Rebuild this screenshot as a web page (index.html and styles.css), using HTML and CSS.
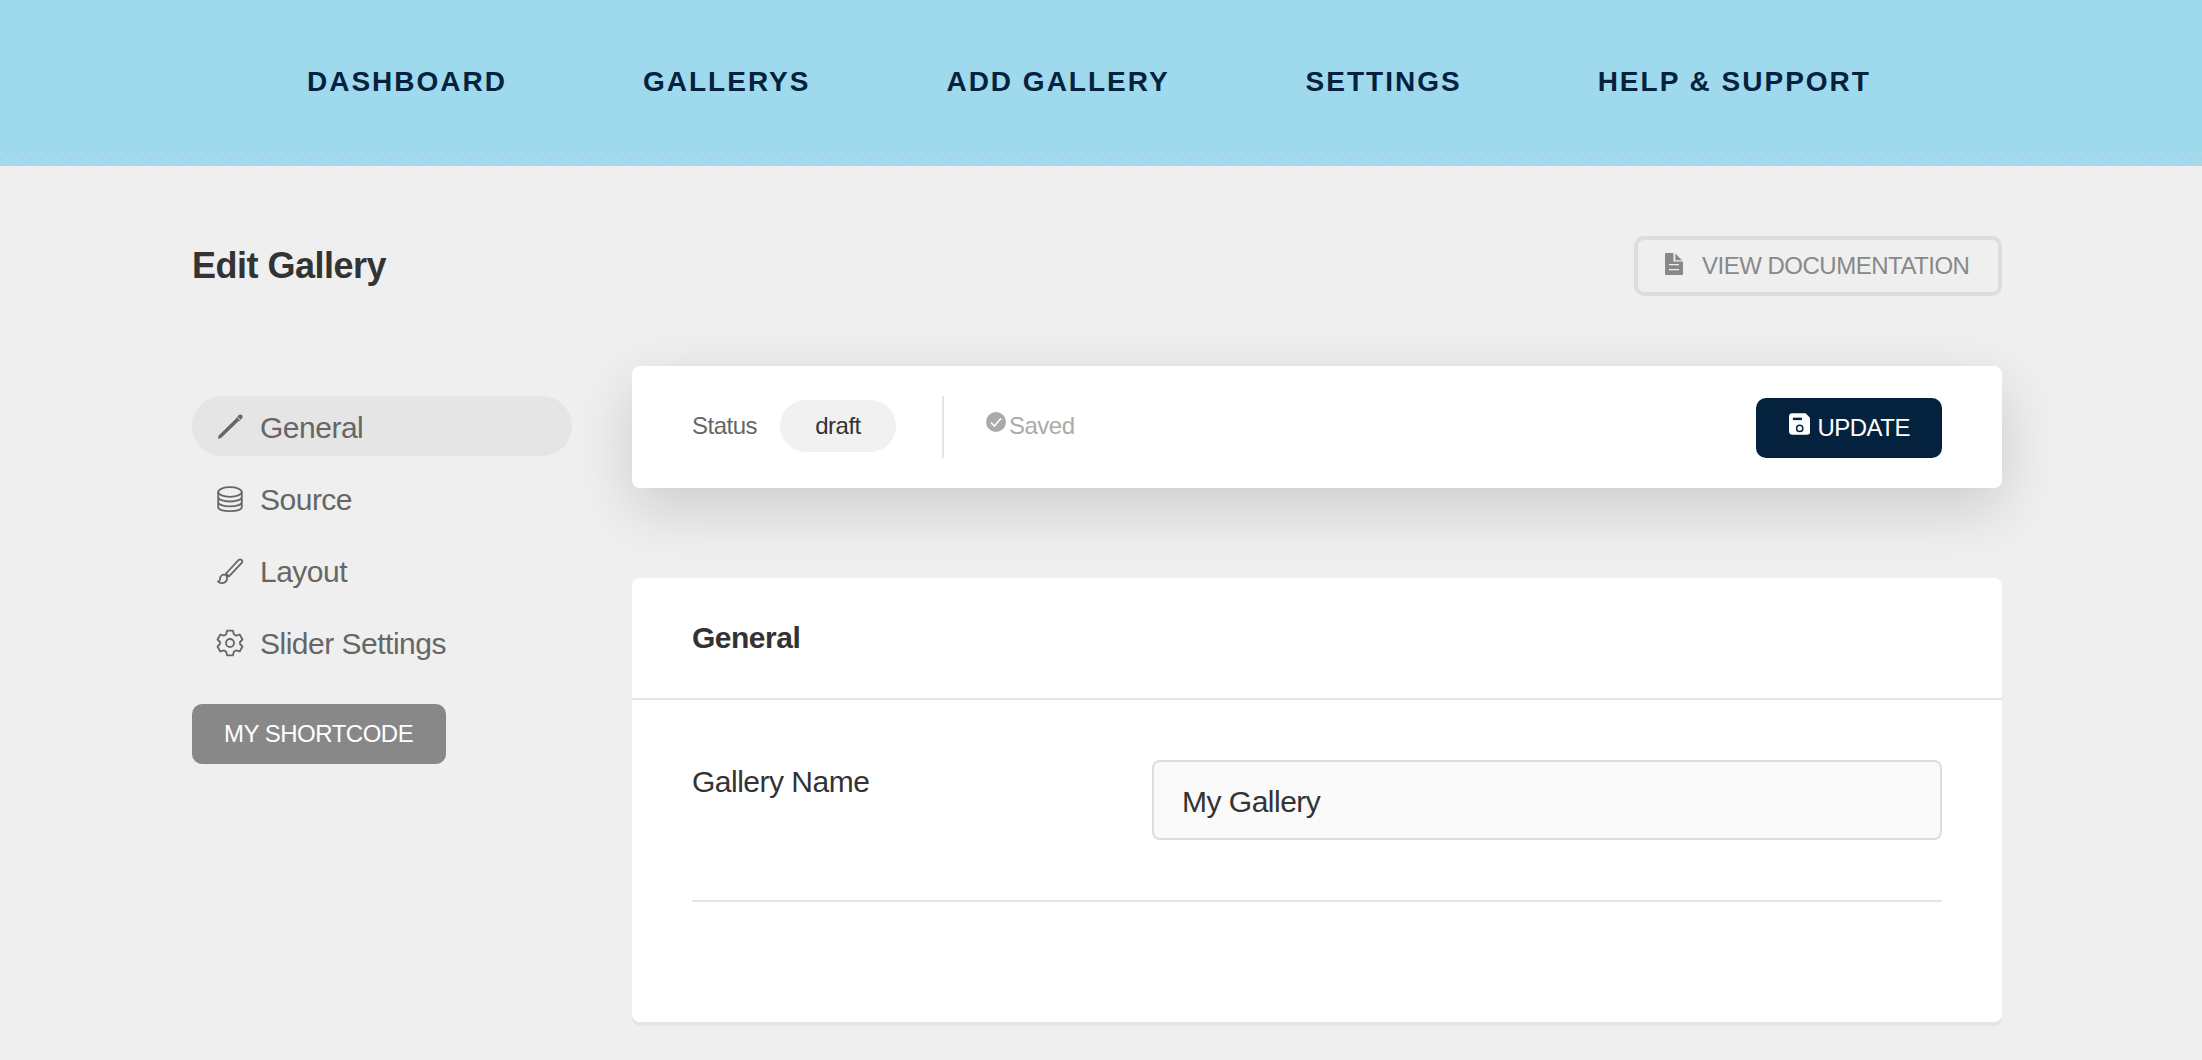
FILE: index.html
```html
<!DOCTYPE html>
<html lang="en">
<head>
<meta charset="utf-8">
<title>Edit Gallery</title>
<link rel="stylesheet" href="styles.css">
</head>
<body>
<header class="topbar">
  <nav class="topnav">
    <a>DASHBOARD</a>
    <a>GALLERYS</a>
    <a>ADD GALLERY</a>
    <a>SETTINGS</a>
    <a>HELP &amp; SUPPORT</a>
  </nav>
  <div class="stripes"></div>
</header>
<div class="page">
  <div class="titlebar">
    <h1>Edit Gallery</h1>
    <a class="btn btn-outline">
      <svg class="icon-doc" viewBox="0 0 18 22"><path fill="#888" fill-rule="evenodd" d="M1 0H8.500V8.500H18V21Q18 22 17 22H1Q0 22 0 21V1Q0 0 1 0ZM4 11V12.200H14V11ZM4 16V17.200H14V16Z"/><path fill="#888" d="M10.300 .5L17 7.300H10.300Z"/></svg>
      <span>VIEW DOCUMENTATION</span>
    </a>
  </div>
  <div class="columns">
    <aside class="sidebar">
      <a class="item active"><svg viewBox="0 0 26 26"><path fill="#666" d="M1 25L1.500 21.800L19.300 4.300Q20.300 3.800 21.200 4.600L21.600 5Q22.400 5.900 21.700 6.900L4.300 23.800Z"/><path stroke="#666" stroke-width="1" d="M19 4.600L21.500 2.200M22 7L24 4.800"/><circle cx="23.300" cy="2.800" r="2.300" fill="#666"/></svg><span>General</span></a>
      <a class="item"><svg viewBox="0 0 26 26" class="line"><ellipse cx="13" cy="6" rx="11.800" ry="4.800"/><path d="M1.200 6V21C1.200 23.500 6 25.200 13 25.200S24.800 23.500 24.800 21V6M1.200 11C1.200 13.500 6 15.500 13 15.500S24.800 13.500 24.800 11M1.200 16C1.200 18.500 6 20.400 13 20.400S24.800 18.500 24.800 16"/></svg><span>Source</span></a>
      <a class="item"><svg viewBox="0 0 26 26" class="line"><path d="M9 15.500L21.500 2.200C23.500 .2 26.600 2.600 24.700 4.900L12 18.300ZM8.800 17C5 15.800 2.800 18.500 3 21.300C3 22.800 2 23.400 .9 23.300C3 26 8.500 26 10 21.500C10.500 19.500 10 18 8.800 17Z"/></svg><span>Layout</span></a>
      <a class="item"><svg viewBox="0 0 26 26" class="line"><circle cx="13" cy="13" r="4"/><path d="M10 .6H16L16.800 4.200L19.300 5.700L22.700 4.500L25.500 9.500L23 12V14L25.500 16.500L22.700 21.500L19.300 20.300L16.800 21.800L16 25.400H10L9.200 21.800L6.700 20.300L3.300 21.500L.5 16.500L3 14V12L.5 9.500L3.300 4.500L6.700 5.700L9.200 4.200Z"/></svg><span>Slider Settings</span></a>
      <a class="btn btn-gray">MY SHORTCODE</a>
    </aside>
    <main class="content">
      <section class="statusbar">
        <span class="status-label">Status</span>
        <span class="status-pill">draft</span>
        <span class="separator"></span>
        <svg class="icon-check" viewBox="0 0 20 20"><circle cx="10" cy="10" r="10" fill="#aaa"/><path d="M5 10.500L8.300 14L15.200 6.300" fill="none" stroke="#fff" stroke-width="1.600"/></svg>
        <span class="saved">Saved</span>
        <a class="btn btn-dark"><svg class="icon-save" viewBox="0 0 22 22"><path fill="#fff" d="M3.500 0H17L22 5V18.500Q22 22 18.500 22H3.500Q0 22 0 18.500V3.500Q0 0 3.500 0Z"/><path fill="#04223d" d="M4 4.500H13.300V7H4Z"/><circle cx="11" cy="15.500" r="3.200" fill="none" stroke="#04223d" stroke-width="1.500"/></svg><span>UPDATE</span></a>
      </section>
      <section class="panel">
        <h2>General</h2>
        <div class="panel-body">
          <div class="field">
            <label for="gallery-name">Gallery Name</label>
            <input id="gallery-name" type="text" value="My Gallery">
          </div>
        </div>
      </section>
    </main>
  </div>
</div>
</body>
</html>
```
FILE: styles.css
```css
* { box-sizing: border-box; }
body {
  margin: 0;
  height: 1060px;
  overflow: hidden;
  background: #efefef;
  color: #333;
  font-family: "Liberation Sans", Arial, sans-serif;
  font-size: 30px;
  letter-spacing: -0.5px;
}
.topbar {
  height: 166px;
  background: #9fd9ee;
  display: flex;
  flex-direction: column;
}
.topnav {
  height: 152px;
  padding: 66px 0 0 307px;
  display: flex;
  gap: 136px;
  color: #04223d;
  font-size: 28px;
  line-height: 32px;
  font-weight: bold;
  letter-spacing: 2px;
  white-space: nowrap;
}
.stripes {
  height: 14px;
  background: repeating-linear-gradient(135deg, transparent 0 0.8px, #b1d7e3 1.4px 2.8px, transparent 3.4px 7.071px);
}
.page { width: 1810px; margin-left: 192px; }
.titlebar {
  padding-top: 70px;
  display: flex;
  justify-content: space-between;
  align-items: center;
}
h1 { margin: 0; font-size: 36px; line-height: 60px; }
.btn {
  display: flex;
  align-items: center;
  height: 60px;
  padding: 0 32px;
  border-radius: 10px;
  font-size: 24px;
  line-height: 60px;
  white-space: nowrap;
}
.btn-outline { width: 368px; padding: 0 27px; border: 4px solid #ddd; color: #888; }
.icon-doc { width: 18px; height: 22px; margin: 0 19px 4px 0; }
.btn-gray { width: 254px; margin-top: 32px; background: #888; color: #fff; }
.btn-dark { width: 186px; margin: 2px 0 0 auto; background: #04223d; color: #fff; }
.icon-save { width: 22px; height: 22px; margin: 0 7px 8px 1px; }
.columns { display: flex; gap: 60px; padding-top: 70px; }
.sidebar { width: 380px; padding-top: 30px; }
.item {
  display: flex;
  align-items: center;
  height: 60px;
  margin-bottom: 12px;
  padding-left: 25px;
  border-radius: 30px;
  color: #666;
  line-height: 60px;
}
.item svg { width: 26px; height: 26px; margin: 2px 17px 0 0; overflow: visible; }
.item span { padding-top: 3px; }
.line { fill: none; stroke: #666; stroke-width: 1.800; stroke-linejoin: round; }
.active { background: #e5e5e5; }
.content { width: 1370px; }
.statusbar {
  display: flex;
  align-items: center;
  height: 122px;
  padding: 0 60px;
  border-radius: 8px;
  background: #fff;
  box-shadow: 0 20px 60px rgba(0, 0, 0, .15);
  font-size: 24px;
}
.status-label { width: 88px; color: #666; margin-top: -2px; }
.status-pill {
  width: 116px;
  height: 52px;
  margin-top: -2px;
  border-radius: 26px;
  background: #f1f1f1;
  line-height: 52px;
  text-align: center;
}
.separator { width: 2px; height: 62px; margin: 0 42px 0 46px; background: #e5e5e5; }
.icon-check { width: 20px; height: 20px; margin: 0 3px 10px 0; }
.saved { color: #aaa; margin-top: -2px; }
.panel {
  height: 444px;
  margin-top: 90px;
  border-radius: 8px;
  background: #fff;
  box-shadow: 0 4px 0 #e5e5e5;
}
h2 {
  margin: 0;
  height: 122px;
  padding-left: 60px;
  border-bottom: 2px solid #e5e5e5;
  font-size: 30px;
  line-height: 120px;
}
.panel-body { padding: 60px; }
.field {
  display: flex;
  justify-content: space-between;
  height: 142px;
  border-bottom: 2px solid #e5e5e5;
}
label { line-height: 44px; }
input {
  width: 790px;
  height: 80px;
  padding: 3px 28px 0;
  border: 2px solid #ddd;
  border-radius: 8px;
  background: #fafafa;
  color: #333;
  font: inherit;
  letter-spacing: inherit;
}
```
